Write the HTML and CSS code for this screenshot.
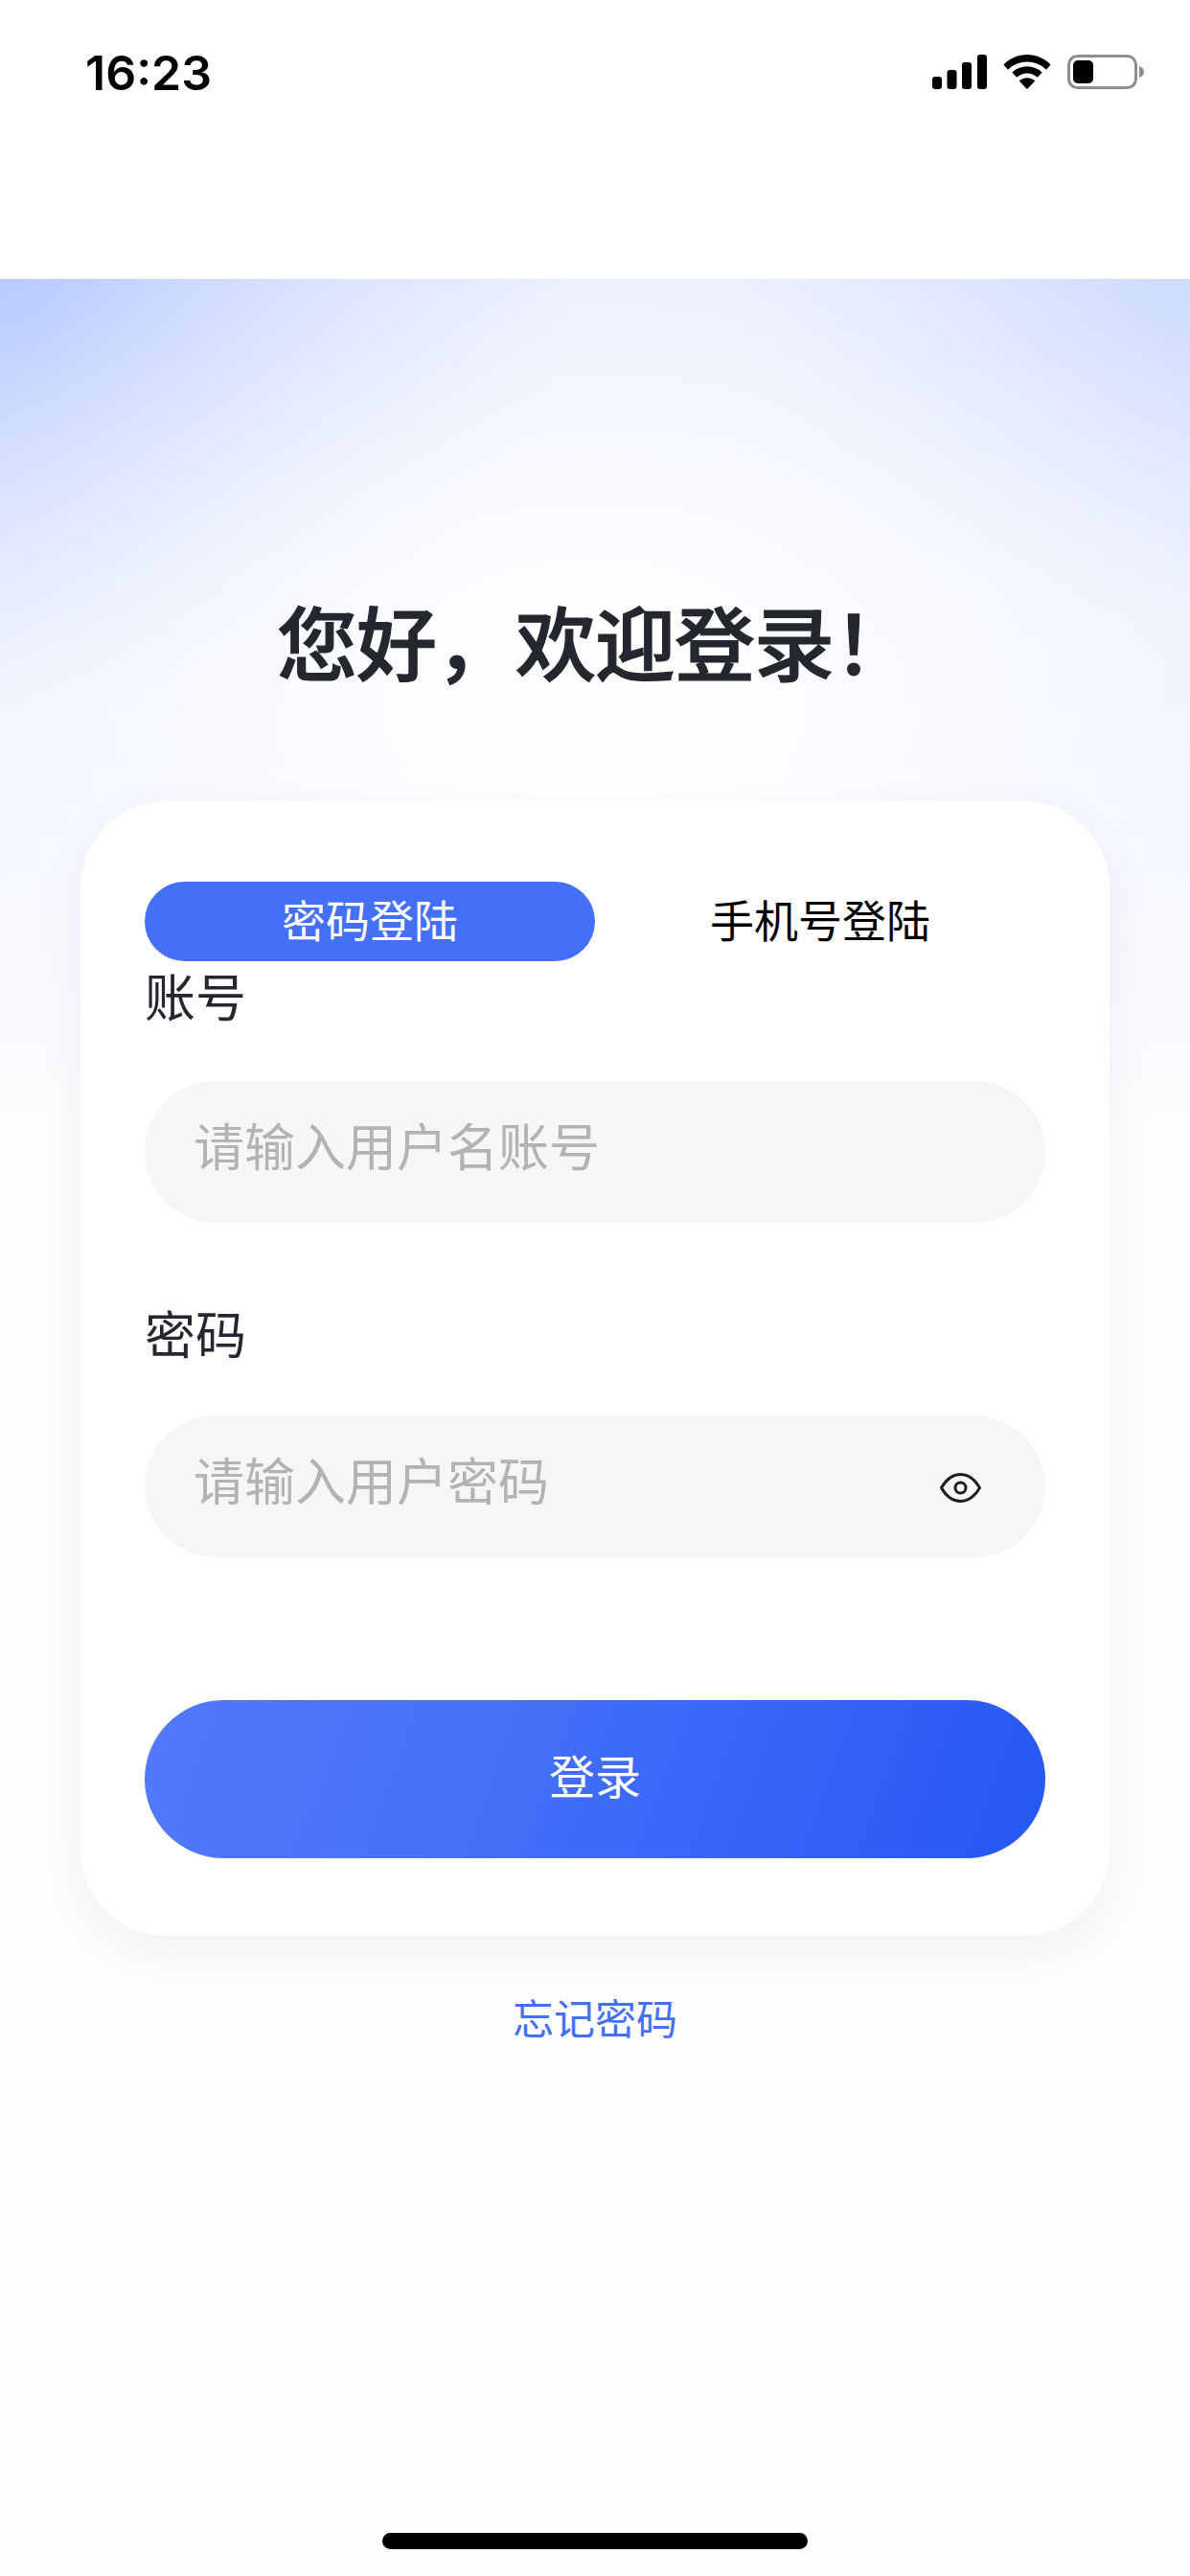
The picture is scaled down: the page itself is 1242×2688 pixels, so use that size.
FILE: index.html
```html
<!DOCTYPE html>
<html lang="zh-CN">
<head>
    <meta charset="UTF-8">
    <meta name="viewport" content="width=device-width, initial-scale=1.0">
    <title>登录</title>
    <link rel="stylesheet" href="styles.css">
</head>
<body>
    <div class="status-bar">
        <span class="time">16:23</span>
        <div class="status-icons">
            <svg class="icon-signal" width="57" height="36" viewBox="0 0 57 36">
                <rect x="0" y="23" width="10" height="13" rx="3"/>
                <rect x="15.500" y="16" width="10" height="20" rx="3"/>
                <rect x="31" y="8" width="10" height="28" rx="3"/>
                <rect x="47" y="0" width="10" height="36" rx="3"/>
            </svg>
            <svg class="icon-wifi" width="50" height="36" viewBox="0 0 52 38">
                <path d="M26 0C16 0 7 4 0 11l5 5.500C11 11 18 8 26 8s15 3 21 8.500l5-5.500C45 4 36 0 26 0z"/>
                <path d="M26 13c-6.500 0-12 2.500-16.500 6.500l5 5.500C18 22 22 20.500 26 20.500S34 22 37.500 25l5-5.500C38 15.500 32.500 13 26 13z"/>
                <path d="M26 25.500c-3.500 0-6.500 1.300-8.800 3.500L26 38l8.800-9c-2.300-2.200-5.300-3.500-8.800-3.500z"/>
            </svg>
            <svg class="icon-battery" width="80" height="36" viewBox="0 0 80 36">
                <rect x="1.500" y="1.500" width="70" height="33" rx="9" fill="none" stroke="#8e8e8e" stroke-width="3"/>
                <rect x="6" y="6" width="21" height="24" rx="5"/>
                <path d="M75 12c3 1 5 3 5 6s-2 5-5 6z" fill="#8e8e8e"/>
            </svg>
        </div>
    </div>

    <div class="hero">
        <h1>您好，欢迎登录！</h1>

        <div class="card">
            <div class="tabs">
                <div class="tab active">密码登陆</div>
                <div class="tab">手机号登陆</div>
            </div>

            <label class="field-label">账号</label>
            <div class="field">
                <input type="text" placeholder="请输入用户名账号">
            </div>

            <label class="field-label second">密码</label>
            <div class="field">
                <input type="password" placeholder="请输入用户密码">
                <svg class="icon-eye" width="43" height="31" viewBox="0 0 43 31" fill="none" stroke="#1f1f1f" stroke-width="3">
                    <path d="M1.500 15.500C7 6 14 1.500 21.500 1.500S36 6 41.500 15.500C36 25 29 29.500 21.500 29.500S7 25 1.500 15.500z" stroke-linejoin="round"/>
                    <circle cx="21.500" cy="15.500" r="5.500"/>
                </svg>
            </div>

            <button type="button" class="login-btn">登录</button>
        </div>

        <a class="forgot">忘记密码</a>
    </div>

    <div class="home-indicator"></div>
</body>
</html>
```

FILE: styles.css
```css
* {
    box-sizing: border-box;
}
html, body {
    height: 2688px;
}
body {
    margin: 0;
    width: 1242px;
    position: relative;
    overflow: hidden;
    background-color: #fdfdfd;
    font-family: "Noto Sans CJK SC", "Noto Sans", sans-serif;
    color: #24272e;
}
.status-bar {
    height: 291px;
    background-color: #fff;
    padding: 48px 48px 0 89px;
    display: flex;
    justify-content: space-between;
    align-items: flex-start;
}
.time {
    font-family: Inter, "Liberation Sans", sans-serif;
    font-size: 50px;
    font-weight: 600;
    line-height: 56px;
    color: #000;
}
.status-icons {
    display: flex;
    align-items: center;
    gap: 17px;
    padding-top: 9px;
}
.icon-signal, .icon-wifi, .icon-battery {
    display: block;
    fill: #000;
}
.hero {
    height: 2397px;
    padding-top: 321px;
    display: flex;
    flex-direction: column;
    align-items: center;
    background:
        radial-gradient(ellipse 820px 560px at 50% 430px, rgba(255, 255, 255, 0.95) 15%, rgba(255, 255, 255, 0) 100%),
        radial-gradient(ellipse 600px 440px at 0 0, #b9ccff, rgba(185, 204, 255, 0) 100%),
        radial-gradient(ellipse 480px 360px at 100% 0, #cfdcff, rgba(207, 220, 255, 0) 100%),
        linear-gradient(180deg, #e6ebff 0, #eef2ff 500px, #fdfdfd 900px);
}
h1 {
    margin: 0;
    font-size: 84px;
    font-weight: 500;
    -webkit-text-stroke: 1.2px #24272e;
    line-height: 112px;
    letter-spacing: -1px;
    color: #24272e;
}
.card {
    width: 1074px;
    height: 1184px;
    margin-top: 112px;
    padding: 84px 67px 0;
    background-color: #fff;
    border-radius: 90px;
    box-shadow: 0 18px 50px rgba(40, 40, 60, 0.05);
}
.tabs {
    display: flex;
    height: 83px;
}
.tab {
    width: 470px;
    height: 83px;
    line-height: 76px;
    font-size: 46px;
    text-align: center;
    color: #000;
    border-radius: 42px;
}
.tab.active {
    background-color: #4470f8;
    color: #fff;
}
.field-label {
    display: block;
    font-size: 53px;
    line-height: 60px;
    height: 60px;
    margin-top: 5px;
    color: #24272e;
}
.field-label.second {
    margin-top: 84px;
}
.field {
    margin-top: 60px;
    height: 148px;
    border-radius: 74px;
    background-color: #f6f6f6;
    display: flex;
    align-items: center;
    padding: 0 67px 0 51px;
}
.field-label.second + .field {
    margin-top: 57px;
}
.field input {
    flex: 1;
    min-width: 0;
    height: 130px;
    margin-bottom: 16px;
    padding: 0;
    border: none;
    outline: none;
    background: none;
    font-family: inherit;
    font-size: 53px;
}
.field input::placeholder {
    color: #b3b3b3;
    opacity: 1;
}
.icon-eye {
    display: block;
    flex: none;
    margin-top: 2px;
}
.login-btn {
    display: block;
    width: 100%;
    height: 165px;
    margin-top: 149px;
    border: none;
    border-radius: 83px;
    background: linear-gradient(110deg, #5379fb 0, #4470f8 40%, #2557f3 100%);
    color: #fff;
    font-family: inherit;
    font-size: 48px;
    line-height: 60px;
    padding: 0 0 12px;
}
.forgot {
    display: block;
    margin-top: 54px;
    font-size: 43px;
    line-height: 60px;
    color: #4470f8;
}
.home-indicator {
    position: absolute;
    left: 399px;
    bottom: 28px;
    width: 444px;
    height: 17px;
    border-radius: 9px;
    background-color: #000;
}
```
